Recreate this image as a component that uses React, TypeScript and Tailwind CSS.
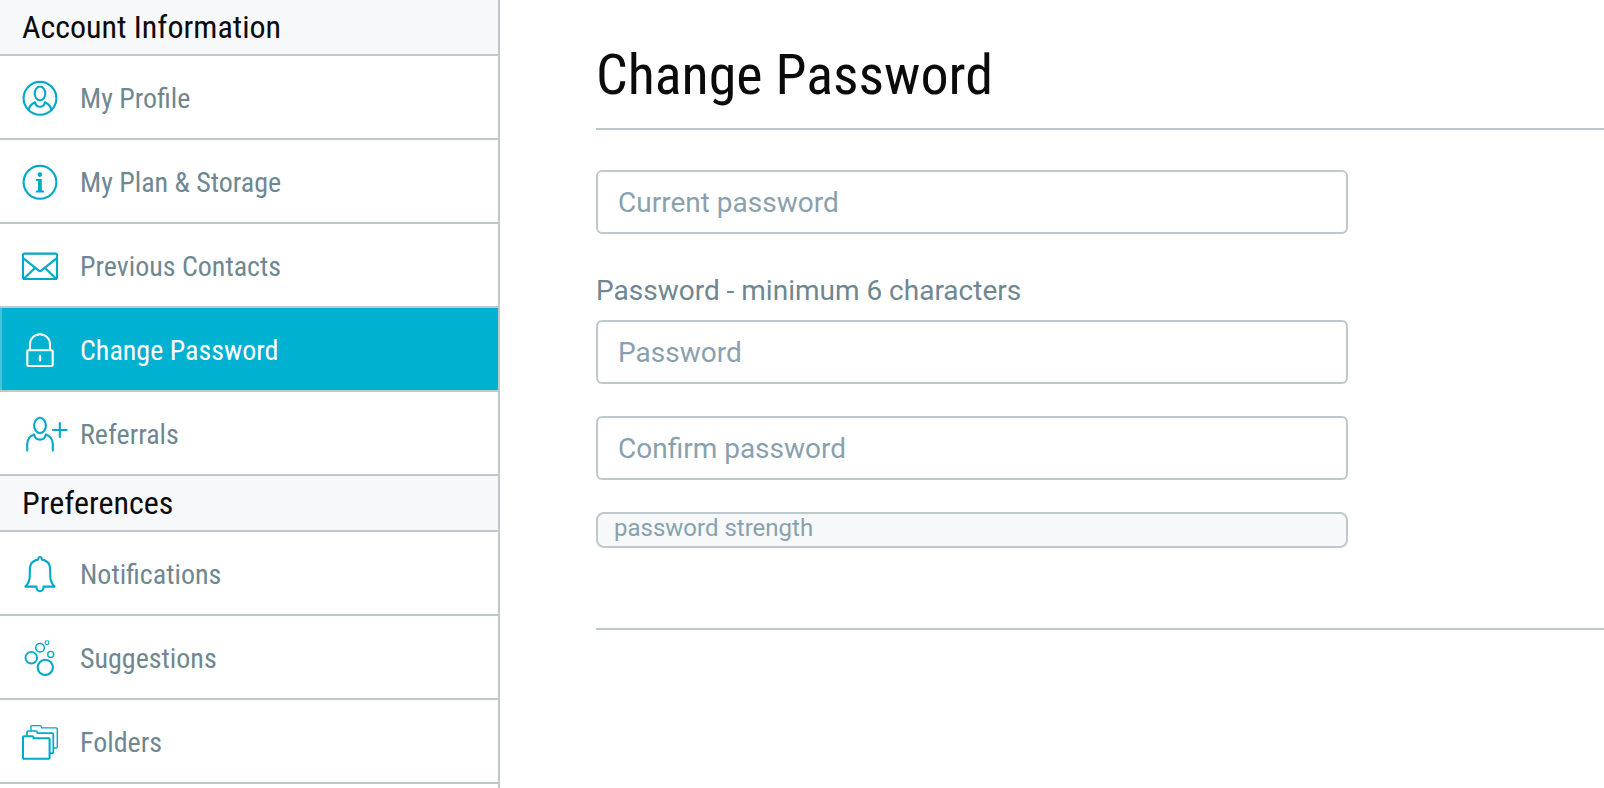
import type { ReactNode } from "react";

const condensed = "font-['Roboto_Condensed','Liberation_Sans_Narrow',Roboto,sans-serif]";

function Icon({ children }: { children: ReactNode }) {
  return (
    <svg
      aria-hidden="true"
      viewBox="0 0 48 40"
      className="h-10 w-12 shrink-0"
      fill="none"
      stroke="currentColor"
      strokeWidth="2.1"
      strokeLinecap="round"
      strokeLinejoin="round"
    >
      {children}
    </svg>
  );
}

const icons = {
  profile: (
    <Icon>
      <circle cx="20" cy="21.3" r="16.4" />
      <ellipse cx="20" cy="16.4" rx="5.3" ry="6.9" />
      <path d="M8.7 32.6C9.6 28.8 11.2 27 15 25.3C15.6 28.2 17.6 29.8 20 29.8S24.4 28.2 25 25.3C28.8 27 30.4 28.8 31.3 32.6" />
    </Icon>
  ),
  info: (
    <Icon>
      <circle cx="20" cy="21.3" r="16.4" />
      <circle cx="19.9" cy="13.6" r="2.3" fill="currentColor" stroke="none" />
      <path d="M16 17.9H21.8V29.4H24V31.6H15.9V29.4H18V20.1H16Z" fill="currentColor" stroke="none" />
    </Icon>
  ),
  mail: (
    <Icon>
      <rect x="3" y="8.6" width="34" height="25.4" rx="1.5" />
      <path d="M3.4 13.4L18.8 25.6Q20 26.6 21.2 25.6L36.6 13.4M4 33.4L15 23M36 33.4L25 23" />
    </Icon>
  ),
  lock: (
    <Icon>
      <rect x="7.3" y="21.2" width="25.4" height="15.8" rx="1" />
      <path d="M10 21V15.2A10 10 0 0 1 30 15.2V21" />
      <path d="M20 27V31.2" strokeWidth="2.4" />
    </Icon>
  ),
  referral: (
    <Icon>
      <ellipse cx="20" cy="12.4" rx="5.9" ry="7.6" />
      <path d="M7.2 37.6V31C7.2 26.4 9.6 23.2 14.2 21.6C14.8 24.8 17 26.6 20 26.6S25.2 24.8 25.8 21.6C30.4 23.2 32.8 26.4 32.8 31V37.6" />
      <path d="M33 17H46.6M39.8 10V24" />
    </Icon>
  ),
  bell: (
    <Icon>
      <path d="M18.2 6.4C18.2 3.2 21.8 3.2 21.8 6.4C26.8 7.4 30.2 11 30.2 16.4V22C30.2 27.6 31.2 30.4 34.6 33.6H23.5C23.7 36.4 22.3 38.2 20 38.2S16.3 36.4 16.5 33.6H5.4C8.8 30.4 9.8 27.6 9.8 22V16.4C9.8 11 13.2 7.4 18.2 6.4Z" />
    </Icon>
  ),
  bubbles: (
    <Icon>
      <circle cx="25.3" cy="30.3" r="7.6" />
      <circle cx="11.3" cy="20.7" r="5.8" strokeWidth="1.9" />
      <circle cx="20" cy="10.7" r="4.3" strokeWidth="1.5" />
      <circle cx="30.7" cy="17.4" r="3" strokeWidth="1.4" />
      <circle cx="27" cy="5.7" r="1.9" strokeWidth="1.1" />
    </Icon>
  ),
  folders: (
    <Icon>
      <path d="M3 16.2Q3 15.2 4 15.2H12.4Q13.4 15.2 13.6 17.2H28.6Q29.6 17.2 29.6 18.2V36.8Q29.6 37.8 28.6 37.8H4Q3 37.8 3 36.8Z" />
      <path d="M7 14V11Q7 10 8 10H16.4Q17.2 10 17.4 12.2H32.4Q33.3 12.2 33.3 13.2V31.2Q33.3 32.2 32.3 32.2H30.4" strokeWidth="1.7" />
      <path d="M11 9.2V5.6Q11 4.6 12 4.6H20.6Q21.4 4.6 21.6 6.9H36.4Q37.3 6.9 37.3 7.9V26Q37.3 27 36.3 27H34.2" strokeWidth="1.4" />
    </Icon>
  ),
};

type Item = { label: string; icon: keyof typeof icons; active?: boolean };

const sections: { title: string; items: Item[] }[] = [
  {
    title: "Account Information",
    items: [
      { label: "My Profile", icon: "profile" },
      { label: "My Plan & Storage", icon: "info" },
      { label: "Previous Contacts", icon: "mail" },
      { label: "Change Password", icon: "lock", active: true },
      { label: "Referrals", icon: "referral" },
    ],
  },
  {
    title: "Preferences",
    items: [
      { label: "Notifications", icon: "bell" },
      { label: "Suggestions", icon: "bubbles" },
      { label: "Folders", icon: "folders" },
    ],
  },
];

function NavItem({ label, icon, active }: Item) {
  return (
    <li className="border-b-2 border-[#bdc9cd]">
      <a
        href="#"
        aria-current={active ? "page" : undefined}
        className={
          active
            ? "flex items-start gap-3 border-l-2 border-white/25 bg-[#00b1d2] pt-[21px] pb-[17px] pl-[18px] text-white"
            : "flex items-start gap-3 border-l-2 border-transparent pt-[21px] pb-[17px] pl-[18px] text-[#00a9ca]"
        }
      >
        {icons[icon]}
        <span className={active ? "text-[28px] leading-[44px]" : "text-[28px] leading-[44px] text-[#6f8791]"}>
          {label}
        </span>
      </a>
    </li>
  );
}

function PasswordField({ id, placeholder }: { id: string; placeholder: string }) {
  return (
    <input
      id={id}
      type="password"
      placeholder={placeholder}
      aria-label={placeholder}
      className="block h-16 w-full rounded-md border-2 border-[#bdc9cd] bg-white px-5 text-[28px] text-[#6f8791] outline-none placeholder:text-[#8aa1ad] placeholder:opacity-100"
    />
  );
}

export default function App() {
  return (
    <div className="flex min-h-screen bg-white font-[Roboto,sans-serif]">
      <nav className={`w-[500px] shrink-0 border-r-2 border-[#bdc9cd] ${condensed}`}>
        {sections.map((section) => (
          <section key={section.title}>
            <h2 className="border-b-2 border-[#bdc9cd] bg-[#f6f8fa] pl-[22px] text-[32px] leading-[54px] text-[#0b0b0b]">
              {section.title}
            </h2>
            <ul>
              {section.items.map((item) => (
                <NavItem key={item.label} {...item} />
              ))}
            </ul>
          </section>
        ))}
      </nav>
      <main className="min-w-0 flex-1 pl-24">
        <h1 className={`pt-9 pb-3.5 text-[56px] leading-[78px] text-[#0b0b0b] ${condensed}`}>Change Password</h1>
        <form className="border-y-2 border-[#bdc9cd] pt-10 pb-20">
          <div className="max-w-[752px]">
            <PasswordField id="current-password" placeholder="Current password" />
            <label htmlFor="new-password" className="block pt-9 pb-2 text-[28px] leading-[42px] text-[#6f8791]">
              Password - minimum 6 characters
            </label>
            <PasswordField id="new-password" placeholder="Password" />
            <div className="py-8">
              <PasswordField id="confirm-password" placeholder="Confirm password" />
            </div>
            <div className="h-9 rounded-lg border-2 border-[#bdc9cd] bg-[#f6f8fa] pl-4 text-[24px] leading-[28px] text-[#8aa1ad]">
              password strength
            </div>
          </div>
        </form>
      </main>
    </div>
  );
}
